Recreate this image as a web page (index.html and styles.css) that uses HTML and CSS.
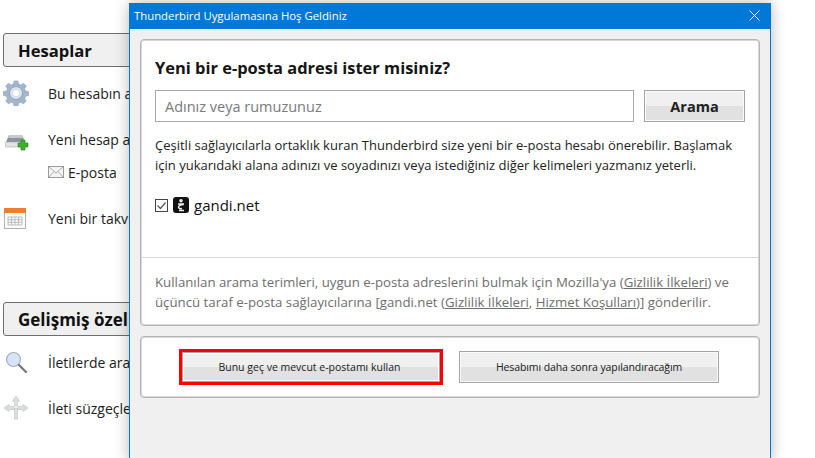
FILE: index.html
```html
<!DOCTYPE html>
<html lang="tr">
<head>
<meta charset="utf-8">
<title>Thunderbird</title>
<link rel="stylesheet" href="styles.css">
</head>
<body>
<main class="back">
  <h2 class="section-head first">Hesaplar</h2>
  <div class="row row-a">
    <svg class="icon" viewBox="0 0 26 26"><path d="M11 1h4l.6 3 2.300 1 2.600-1.700 2.800 2.800-1.700 2.600 1 2.300 3 .6v4l-3 .6-1 2.300 1.700 2.600-2.800 2.800-2.600-1.700-2.300 1-.6 3h-4l-.6-3-2.300-1-2.600 1.700-2.800-2.800 1.700-2.600-1-2.300-3-.6v-4l3-.6 1-2.300-1.700-2.600 2.800-2.800 2.600 1.700 2.300-1z" fill="#a3b6cb" stroke="#8ea3ba" stroke-width=".6"/><circle cx="13" cy="13" r="6.500" fill="#dfe7f0" stroke="#8ba1b8"/><circle cx="13" cy="13" r="3.800" fill="#fff" stroke="#b7c5d4" stroke-width=".6"/></svg>
    <span>Bu hesabın ayarlarını göster</span>
  </div>
  <div class="row row-b">
    <svg class="icon" viewBox="0 0 26 26"><path d="M3 16l3-7h13l3 7z" fill="#8d9499"/><path d="M6 9h13l1.500 3H5z" fill="#c4c9cc"/><rect x="2.500" y="16" width="20" height="5" rx="1" fill="#e2e4e6" stroke="#a3a8ab" stroke-width=".6"/><path d="M18 14h4v3h3v4h-3v3h-4v-3h-3v-4h3z" fill="#3bb02d" stroke="#1d8a1a" stroke-width=".6"/></svg>
    <span>Yeni hesap aç</span>
  </div>
  <div class="row row-sub">
    <svg class="mail" viewBox="0 0 16 12"><rect x=".5" y=".5" width="15" height="11" fill="#f4f4f4" stroke="#9b9b9b"/><path d="M.5.5L8 7l7.500-6.500M.5 11.500L6 5.500M15.500 11.500L10 5.500" fill="none" stroke="#9b9b9b" stroke-width=".8"/></svg>
    <span>E-posta</span>
  </div>
  <div class="row row-c">
    <svg class="icon" viewBox="0 0 26 26"><rect x="1.500" y="3.500" width="21" height="20" fill="#fbfbfb" stroke="#aeb2b6"/><rect x="1" y="3" width="22" height="5" fill="#ee7f32"/><path d="M5 12h14v8H5zM5 14.700h14M5 17.300h14M8.500 12v8M12 12v8M15.500 12v8" fill="none" stroke="#a9b0b8" stroke-width=".8"/></svg>
    <span>Yeni bir takvim oluştur</span>
  </div>
  <h2 class="section-head second">Gelişmiş özellikler</h2>
  <div class="row row-d">
    <svg class="icon" viewBox="0 0 26 26"><circle cx="10.500" cy="10.500" r="7" fill="#d5e5f8" stroke="#a6aeb6" stroke-width="1.200"/><path d="M16 16l7 7" stroke="#7b7b7b" stroke-width="2.400" stroke-linecap="round"/></svg>
    <span>İletilerde ara</span>
  </div>
  <div class="row row-e">
    <svg class="icon" viewBox="0 0 26 26"><g fill="#dcdfe0" stroke="#bcc0c1" stroke-width=".6"><path d="M13 1l3.500 5h-2v5h-3V6h-2z"/><path d="M1 13l5-3.500v2h5v3H6v2z"/><path d="M25 13l-5-3.500v2h-5v3h5v2z"/><path d="M11.500 13h3v11h-3z"/></g></svg>
    <span>İleti süzgeçlerini yönet</span>
  </div>
</main>

<section class="dialog">
  <header class="titlebar">
    <span>Thunderbird Uygulamasına Hoş Geldiniz</span>
    <svg class="close" viewBox="0 0 11 11"><path d="M.5.5l10 10M10.500.5l-10 10" stroke="#fff" stroke-width="1" fill="none"/></svg>
  </header>
  <div class="dialog-body">
    <div class="panel main-panel">
      <div class="panel-top">
        <h1>Yeni bir e-posta adresi ister misiniz?</h1>
        <div class="search">
          <div class="input">Adınız veya rumuzunuz</div>
          <div class="btn search-btn">Arama</div>
        </div>
        <p class="intro">Çeşitli sağlayıcılarla ortaklık kuran Thunderbird size yeni bir e-posta hesabı önerebilir. Başlamak için yukarıdaki alana adınızı ve soyadınızı veya istediğiniz diğer kelimeleri yazmanız yeterli.</p>
        <div class="provider">
          <svg class="check" viewBox="0 0 13 13"><rect x=".5" y=".5" width="12" height="12" fill="#fff" stroke="#444"/><path d="M2.500 6.500l3 3 5-6" fill="none" stroke="#555" stroke-width="1.200"/></svg>
          <span class="gandi" aria-hidden="true"><svg viewBox="0 0 16 16"><rect width="16" height="16" rx="3" fill="#111"/><circle cx="8" cy="3.800" r="1.800" fill="#eee"/><path d="M5 7h6M10.500 7.500C7 8 5.500 9 5.500 10.200S7.500 12 9 11.500M6 13.500h5" fill="none" stroke="#eee" stroke-width="1.400"/></svg></span>
          <span>gandi.net</span>
        </div>
      </div>
      <p class="legal">Kullanılan arama terimleri, uygun e-posta adreslerini bulmak için Mozilla'ya (<u>Gizlilik İlkeleri</u>) ve üçüncü taraf e-posta sağlayıcılarına [gandi.net (<u>Gizlilik İlkeleri</u>, <u>Hizmet Koşulları</u>)] gönderilir.</p>
    </div>
    <div class="panel actions">
      <div class="highlight"><div class="btn action skip">Bunu geç ve mevcut e-postamı kullan</div></div>
      <div class="btn action later">Hesabımı daha sonra yapılandıracağım</div>
    </div>
  </div>
</section>
</body>
</html>
```

FILE: styles.css
```css
* { box-sizing: border-box; }
html, body { margin: 0; height: 100%; }
body {
  width: 815px;
  height: 458px;
  overflow: hidden;
  position: relative;
  background: #fff;
  font-family: "Open Sans", "Noto Sans", sans-serif;
  color: #1a1a1a;
}
.back {
  width: 129px;
  height: 458px;
  overflow: hidden;
  padding: 33px 0 0 3px;
  font-size: 14px;
  color: #1c1c1c;
}
.section-head {
  width: 400px;
  height: 34px;
  margin: 0;
  padding-left: 14px;
  display: flex;
  align-items: center;
  font-size: 16.600px;
  font-weight: 700;
  color: #111;
  background: #f0f0f0;
  border: 1px solid #6e6e6e;
  border-radius: 3px;
}
.second { margin-top: 71px; font-size: 17px; }
.row {
  display: flex;
  align-items: center;
  white-space: nowrap;
  height: 26px;
}
.row .icon {
  width: 26px;
  height: 26px;
  margin-right: 19px;
  flex: none;
}
.row-a { margin-top: 13px; }
.row-b { margin-top: 20px; }
.row-sub { margin-top: 7px; padding-left: 45px; gap: 4px; }
.row-sub .mail { width: 16px; height: 12px; flex: none; }
.row-c { margin-top: 20px; }
.row-d { margin-top: 13px; }
.row-e { margin-top: 20px; }

.dialog {
  position: absolute;
  left: 129px;
  top: 3px;
  width: 642px;
  height: 460px;
  background: #f0f0f0;
  border: 1px solid #0078d7;
  border-top: 0;
  box-shadow: 0 0 14px rgba(0, 0, 0, .28);
}
.titlebar {
  height: 26px;
  background: #0078d7;
  color: #fff;
  font-size: 11.350px;
  display: flex;
  align-items: center;
  justify-content: space-between;
  padding: 0 10px 1px 4px;
}
.close { width: 11px; height: 11px; }
.dialog-body {
  padding: 10px 10px 0;
  display: flex;
  flex-direction: column;
  gap: 10px;
}
.panel {
  background: #fff;
  border: 1px solid #b4b4b4;
  border-radius: 4px;
  box-shadow: 0 0 0 1px #d8d8d8 inset;
}
.main-panel { height: 287px; display: flex; flex-direction: column; }
.panel-top {
  height: 218px;
  padding: 15px 14px 0;
  border-bottom: 1px solid #d9d9d9;
}
h1 {
  margin: 0;
  font-size: 16.450px;
  line-height: 26px;
  font-weight: 700;
  color: #151515;
  white-space: nowrap;
}
.search {
  display: flex;
  justify-content: space-between;
  margin-top: 9px;
}
.input {
  width: 479px;
  height: 32px;
  padding-left: 9px;
  display: flex;
  align-items: center;
  font-size: 14.500px;
  color: #7a7a7a;
  background: #fff;
  border: 1px solid #a9a9a9;
}
.btn {
  display: flex;
  align-items: center;
  justify-content: center;
  color: #222;
  border: 1px solid #a5a5a5;
  box-shadow: 0 0 0 1px #fafafa inset;
  background: linear-gradient(#f0f0f0 0, #f0f0f0 50%, #e1e1e1 50%, #e1e1e1 100%);
  white-space: nowrap;
}
.search-btn {
  width: 101px;
  height: 32px;
  font-size: 14.500px;
  font-weight: 700;
}
.intro {
  margin: 13px 0 0;
  font-size: 13px;
  line-height: 20px;
  color: #222;
  width: 590px;
}
.provider {
  display: flex;
  align-items: center;
  margin-top: 20px;
  font-size: 15px;
  color: #111;
}
.check { width: 13px; height: 13px; margin-right: 5px; }
.gandi { width: 16px; height: 16px; margin-right: 5px; display: flex; }
.gandi svg { width: 16px; height: 16px; }
.legal {
  margin: 0;
  padding: 14px 14px 0;
  font-size: 13.240px;
  line-height: 20px;
  color: #6e6e6e;
}
.actions {
  height: 62px;
  display: flex;
  align-items: center;
  padding-left: 38px;
  gap: 16px;
}
.highlight {
  border: 3px solid #f00;
  display: flex;
}
.action {
  width: 258px;
  height: 30px;
  font-size: 10.500px;
}
.skip { padding-right: 3px; }
.later { width: 260px; height: 32px; letter-spacing: -.1px; }
```
